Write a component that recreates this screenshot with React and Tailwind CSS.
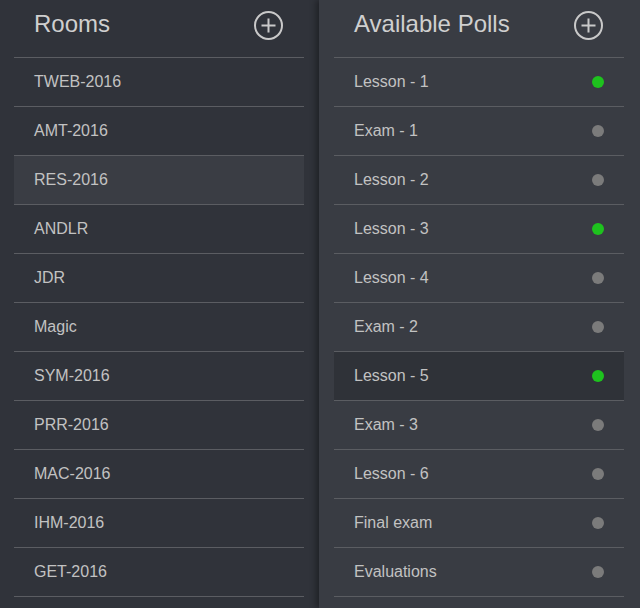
import React from "react";

const rooms = [
  "TWEB-2016",
  "AMT-2016",
  "RES-2016",
  "ANDLR",
  "JDR",
  "Magic",
  "SYM-2016",
  "PRR-2016",
  "MAC-2016",
  "IHM-2016",
  "GET-2016",
];

const polls = [
  { name: "Lesson - 1", open: true },
  { name: "Exam - 1", open: false },
  { name: "Lesson - 2", open: false },
  { name: "Lesson - 3", open: true },
  { name: "Lesson - 4", open: false },
  { name: "Exam - 2", open: false },
  { name: "Lesson - 5", open: true },
  { name: "Exam - 3", open: false },
  { name: "Lesson - 6", open: false },
  { name: "Final exam", open: false },
  { name: "Evaluations", open: false },
];

// Round "+" button in the panel headers
const AddButton = () => (
  <button type="button" className="mt-[11px] w-[29px] h-[29px] text-[#c9c9c9]">
    <svg viewBox="0 0 29 29" width="29" height="29" fill="none" stroke="currentColor">
      <circle cx="14.5" cy="14.5" r="13.5" strokeWidth="2" />
      <path d="M14.5 7.5v14M7.5 14.5h14" strokeWidth="2" />
    </svg>
  </button>
);

const PanelHeader = ({ title }) => (
  <div className="flex justify-between h-[58px] border-b border-[#5b5d62] pl-[20px] pr-[21px]">
    <h2 className="pt-[12px] text-[24px] leading-none text-[#cfcfcf]">{title}</h2>
    <AddButton />
  </div>
);

const App = () => {
  const selectedRoom = "RES-2016";
  const selectedPoll = "Lesson - 5";

  return (
    <div
      className="flex w-[640px] h-[608px] overflow-hidden text-[16px] text-[#c2c2c2]"
      style={{ fontFamily: '"Liberation Sans", Arial, sans-serif' }}
    >
      {/* Rooms */}
      <div className="w-[319px] bg-[#30333a] px-[14px] pr-[15px]">
        <PanelHeader title="Rooms" />
        <ul>
          {rooms.map((room) => (
            <li
              key={room}
              className={`flex items-center h-[49px] pl-[20px] border-b border-[#5b5d62] ${
                room === selectedRoom ? "bg-[#3a3d44]" : ""
              }`}
            >
              {room}
            </li>
          ))}
        </ul>
      </div>

      {/* Polls */}
      <div className="relative flex-1 bg-[#393c43] px-[15px] pr-[16px] shadow-[-3px_0_6px_rgba(0,0,0,0.35)]">
        <PanelHeader title="Available Polls" />
        <ul>
          {polls.map((poll) => (
            <li
              key={poll.name}
              className={`flex items-center justify-between h-[49px] pl-[20px] pr-[20px] border-b border-[#5b5d62] ${
                poll.name === selectedPoll ? "bg-[#2f3238]" : ""
              }`}
            >
              <span>{poll.name}</span>
              <span
                className={`w-[12px] h-[12px] rounded-full ${
                  poll.open ? "bg-[#1ec21e]" : "bg-[#7b7b7b]"
                }`}
              />
            </li>
          ))}
        </ul>
      </div>
    </div>
  );
};

export default App;
